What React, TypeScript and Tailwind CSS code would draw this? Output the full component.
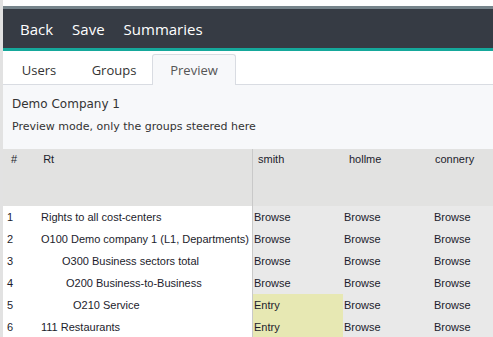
const rows = [
  { n: 1, rt: 'Rights to all cost-centers', indent: 'pl-0', cells: ['Browse', 'Browse', 'Browse'] },
  { n: 2, rt: 'O100 Demo company 1 (L1, Departments)', indent: 'pl-0', cells: ['Browse', 'Browse', 'Browse'] },
  { n: 3, rt: 'O300 Business sectors total', indent: 'pl-[21px]', cells: ['Browse', 'Browse', 'Browse'] },
  { n: 4, rt: 'O200 Business-to-Business', indent: 'pl-[25px]', cells: ['Browse', 'Browse', 'Browse'] },
  { n: 5, rt: 'O210 Service', indent: 'pl-[32px]', cells: ['Entry', 'Browse', 'Browse'] },
  { n: 6, rt: '111 Restaurants', indent: 'pl-0', cells: ['Entry', 'Browse', 'Browse'] },
]

const grid = 'grid grid-cols-[249px_91px_90px_90px]'

export default function App() {
  return (
    <div className="h-[337px] w-[493px] overflow-hidden border-l-[3px] border-[#e2e2e2] bg-white">
      <div className="h-[6px] bg-white" />
      <div className="h-[3px] bg-[#76848b]" />
      <nav className="box-content flex h-[39px] items-center gap-[19px] border-b-[3px] border-[#15a89b] bg-[#363b44] pl-[17px] font-['Open_Sans',sans-serif] text-[15px] text-white">
        <span className="relative top-px">Back</span>
        <span className="relative top-px">Save</span>
        <span className="relative top-px">Summaries</span>
      </nav>
      <div className="flex h-[34px] items-end border-b border-[#d9dce2] font-['Open_Sans',sans-serif] text-[13px] text-[#333]">
        <span className="flex h-[30px] w-[72px] items-center justify-center pt-[3px]">Users</span>
        <span className="ml-[3px] flex h-[30px] w-[72px] items-center justify-center pt-[3px]">Groups</span>
        <span className="relative top-px ml-[2px] flex h-[31px] w-[84px] items-center justify-center rounded-t-[3px] border border-b-0 border-[#d9dce2] bg-[#f7f8fa] pt-[2px] text-[#555]">
          Preview
        </span>
      </div>
      <div className="bg-[#f7f8fa] pt-[11px] font-['DejaVu_Sans',sans-serif] text-[#333]">
        <div className="pl-[9px] text-[12px] leading-4">Demo Company 1</div>
        <div className="mt-[7px] pl-[9px] text-[11px] leading-4">Preview mode, only the groups steered here</div>
        <div className="mt-[14px] font-['Liberation_Sans',sans-serif] text-[11px] text-[#1c1c2c]">
          <div className={`${grid} h-[57px] bg-[#e2e2e1]`}>
            <div className="flex pt-[2px]">
              <span className="pl-[8px]">#</span>
              <span className="pl-[26px]">Rt</span>
            </div>
            <div className="border-l border-[#c9c9c9] pl-[5px] pt-[2px]">smith</div>
            <div className="pl-[6px] pt-[2px]">hollme</div>
            <div className="pl-[2px] pt-[2px]">connery</div>
          </div>
          {rows.map((r) => (
            <div key={r.n} className={`${grid} h-[22px] items-stretch whitespace-nowrap`}>
              <div className="flex items-center overflow-hidden bg-white">
                <span className="w-[38px] shrink-0 pl-[4px]">{r.n}</span>
                <span className={r.indent}>{r.rt}</span>
              </div>
              {r.cells.map((c, i) => (
                <div
                  key={i}
                  className={`flex items-center ${i === 0 ? 'border-l border-[#c9c9c9]' : ''} ${c === 'Entry' ? 'bg-[#e7e8b3]' : 'bg-[#e9e9e9]'} pl-[1px]`}
                >
                  {c}
                </div>
              ))}
            </div>
          ))}
        </div>
      </div>
    </div>
  )
}
